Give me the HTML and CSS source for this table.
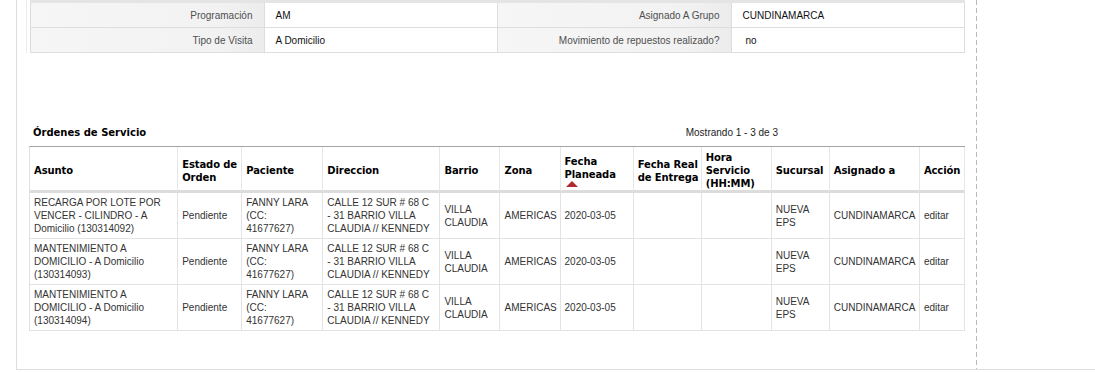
FILE: index.html
```html
<!DOCTYPE html>
<html lang="es">
<head>
<meta charset="utf-8">
<title>Órdenes de Servicio</title>
<link rel="stylesheet" href="styles.css">
</head>
<body>
<div class="page">
  <div class="main">
    <div class="detail-wrap">
      <table class="detail">
        <tr>
          <td class="lbl">Programación</td>
          <td class="val">AM</td>
          <td class="lbl">Asignado A Grupo</td>
          <td class="val">CUNDINAMARCA</td>
        </tr>
        <tr>
          <td class="lbl">Tipo de Visita</td>
          <td class="val">A Domicilio</td>
          <td class="lbl">Movimiento de repuestos realizado?</td>
          <td class="val val-shift">no</td>
        </tr>
      </table>
    </div>

    <div class="list-head">
      <h3 class="list-title">Órdenes de Servicio</h3>
      <span class="list-count">Mostrando 1 - 3 de 3</span>
    </div>

    <table class="list">
      <colgroup>
        <col class="c-asunto"><col class="c-estado"><col class="c-paciente"><col class="c-dir">
        <col class="c-barrio"><col class="c-zona"><col class="c-fecha"><col class="c-real">
        <col class="c-hora"><col class="c-suc"><col class="c-asig"><col class="c-acc">
      </colgroup>
      <thead>
        <tr>
          <th>Asunto</th>
          <th>Estado de Orden</th>
          <th>Paciente</th>
          <th>Direccion</th>
          <th>Barrio</th>
          <th>Zona</th>
          <th>Fecha Planeada<span class="sort-arrow"></span></th>
          <th>Fecha Real de Entrega</th>
          <th>Hora Servicio (HH:MM)</th>
          <th>Sucursal</th>
          <th>Asignado a</th>
          <th>Acción</th>
        </tr>
      </thead>
      <tbody>
        <tr>
          <td>RECARGA POR LOTE POR VENCER - CILINDRO - A Domicilio (130314092)</td>
          <td>Pendiente</td>
          <td>FANNY LARA (CC: 41677627)</td>
          <td>CALLE 12 SUR # 68 C - 31 BARRIO VILLA CLAUDIA // KENNEDY</td>
          <td>VILLA CLAUDIA</td>
          <td>AMERICAS</td>
          <td>2020-03-05</td>
          <td></td>
          <td></td>
          <td>NUEVA EPS</td>
          <td>CUNDINAMARCA</td>
          <td><a class="edit" href="#">editar</a></td>
        </tr>
        <tr>
          <td>MANTENIMIENTO A DOMICILIO - A Domicilio (130314093)</td>
          <td>Pendiente</td>
          <td>FANNY LARA (CC: 41677627)</td>
          <td>CALLE 12 SUR # 68 C - 31 BARRIO VILLA CLAUDIA // KENNEDY</td>
          <td>VILLA CLAUDIA</td>
          <td>AMERICAS</td>
          <td>2020-03-05</td>
          <td></td>
          <td></td>
          <td>NUEVA EPS</td>
          <td>CUNDINAMARCA</td>
          <td><a class="edit" href="#">editar</a></td>
        </tr>
        <tr>
          <td>MANTENIMIENTO A DOMICILIO - A Domicilio (130314094)</td>
          <td>Pendiente</td>
          <td>FANNY LARA (CC: 41677627)</td>
          <td>CALLE 12 SUR # 68 C - 31 BARRIO VILLA CLAUDIA // KENNEDY</td>
          <td>VILLA CLAUDIA</td>
          <td>AMERICAS</td>
          <td>2020-03-05</td>
          <td></td>
          <td></td>
          <td>NUEVA EPS</td>
          <td>CUNDINAMARCA</td>
          <td><a class="edit" href="#">editar</a></td>
        </tr>
      </tbody>
    </table>
  </div>
  <div class="dash"></div>
</div>
</body>
</html>
```

FILE: styles.css
```css
* { box-sizing: content-box; }

html, body {
  margin: 0;
  padding: 0;
  background: #fff;
}

body {
  font-family: "Liberation Sans", Arial, sans-serif;
  font-size: 10px;
  line-height: 13px;
  color: #333;
}

.page {
  display: flex;
  margin-left: 16px;
  height: 369px;
  border-left: 1px solid #dedede;
  border-bottom: 1px solid #dedede;
}

.main {
  flex: 0 0 959px;
}

.dash {
  width: 1px;
  align-self: stretch;
  background: repeating-linear-gradient(to bottom, #b8b8b8 0 5px, transparent 5px 8px);
}

/* ---------- detail table ---------- */
.detail-wrap {
  margin-left: 9px;
  padding-left: 3px;
  border-left: 1px solid #ececec;
  width: 934px;
}

.detail {
  width: 934px;
  table-layout: fixed;
  border-spacing: 0;
  border-top: 3px solid #e4e4e4;
  border-left: 1px solid #dcdcdc;
}

.detail td {
  width: 25%;
  padding: 6px 11px 5px;
  border-right: 1px solid #dddddd;
  border-bottom: 1px solid #dddddd;
  line-height: 13px;
  white-space: nowrap;
}

.detail .lbl {
  text-align: right;
  color: #4f4f4f;
  background: linear-gradient(90deg, #f6f6f6 0%, #f2f2f2 80%, #ececec 100%);
}

.detail .val {
  color: #111;
  background: #fff;
}

.detail .val-shift {
  padding-left: 14px;
}

/* ---------- list header ---------- */
.list-head {
  display: flex;
  justify-content: space-between;
  align-items: center;
  margin: 73px 0 7px 12px;
  width: 931px;
  padding-left: 4px;
}

.list-title {
  margin: 0;
  font-family: "DejaVu Sans", Verdana, sans-serif;
  font-weight: bold;
  font-size: 10px;
  line-height: 13px;
  color: #000;
}

.list-count {
  padding-right: 186px;
  color: #222;
}

/* ---------- list table ---------- */
.list {
  margin-left: 12px;
  width: 935px;
  table-layout: fixed;
  border-spacing: 0;
  border-top: 1px solid #a4a4a4;
  border-left: 1px solid #e0e0e0;
}

.c-asunto { width: 148px; }
.c-estado { width: 64px; }
.c-paciente { width: 81px; }
.c-dir { width: 117px; }
.c-barrio { width: 60px; }
.c-zona { width: 60px; }
.c-fecha { width: 73px; }
.c-real { width: 68px; }
.c-hora { width: 70px; }
.c-suc { width: 58px; }
.c-asig { width: 90px; }
.c-acc { width: 45px; }

.list th {
  font-family: "DejaVu Sans", Verdana, sans-serif;
  font-weight: bold;
  font-size: 10px;
  line-height: 13px;
  letter-spacing: -0.1px;
  color: #000;
  text-align: left;
  vertical-align: middle;
  padding: 4px 0 0 4px;
  height: 39px;
  background: #fff;
  border-right: 1px solid #e6e6e6;
  border-bottom: 3px solid #dcdcdc;
}

.sort-arrow {
  display: block;
  width: 0;
  height: 0;
  margin: 0 0 0 1px;
  border-left: 6px solid transparent;
  border-right: 6px solid transparent;
  border-bottom: 6px solid #b22a2e;
}

.list td {
  padding: 3px 8px 3px 4px;
  height: 39px;
  line-height: 13px;
  vertical-align: middle;
  color: #333;
  border-right: 1px solid #e3e3e3;
  border-bottom: 1px solid #e3e3e3;
}

.edit {
  color: #333;
  text-decoration: none;
}
```
